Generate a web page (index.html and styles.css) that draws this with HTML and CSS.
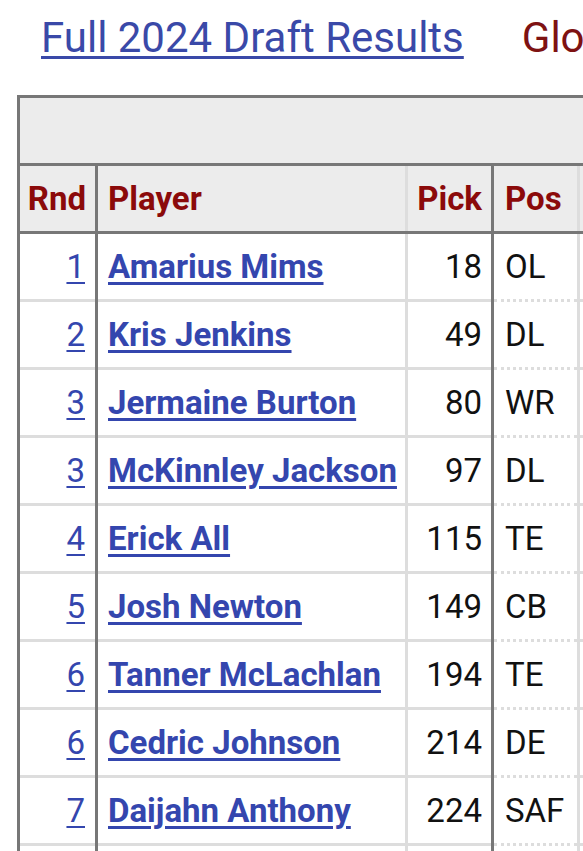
FILE: index.html
```html
<!DOCTYPE html>
<html>
<head>
<meta charset="utf-8">
<link rel="stylesheet" href="styles.css">
</head>
<body>
<div class="top">
  <a class="title" href="#">Full 2024 Draft Results</a>
  <span class="side">Glossary</span>
</div>
<table class="draft">
  <colgroup>
    <col class="c-rnd"><col class="c-player"><col class="c-pick"><col class="c-pos"><col class="c-more">
  </colgroup>
  <tr class="cap"><td colspan="5"></td></tr>
  <tr class="head">
    <th class="rnd">Rnd</th><th class="player">Player</th><th class="pick">Pick</th><th class="pos">Pos</th><th class="more">College</th>
  </tr>
  <tr><td class="rnd"><a href="#">1</a></td><td class="player"><a href="#">Amarius Mims</a></td><td class="pick">18</td><td class="pos">OL</td><td class="more">Georgia</td></tr>
  <tr><td class="rnd"><a href="#">2</a></td><td class="player"><a href="#">Kris Jenkins</a></td><td class="pick">49</td><td class="pos">DL</td><td class="more">Michigan</td></tr>
  <tr><td class="rnd"><a href="#">3</a></td><td class="player"><a href="#">Jermaine Burton</a></td><td class="pick">80</td><td class="pos">WR</td><td class="more">Alabama</td></tr>
  <tr><td class="rnd"><a href="#">3</a></td><td class="player"><a href="#">McKinnley Jackson</a></td><td class="pick">97</td><td class="pos">DL</td><td class="more">Texas A&amp;M</td></tr>
  <tr><td class="rnd"><a href="#">4</a></td><td class="player"><a href="#">Erick All</a></td><td class="pick">115</td><td class="pos">TE</td><td class="more">Iowa</td></tr>
  <tr><td class="rnd"><a href="#">5</a></td><td class="player"><a href="#">Josh Newton</a></td><td class="pick">149</td><td class="pos">CB</td><td class="more">TCU</td></tr>
  <tr><td class="rnd"><a href="#">6</a></td><td class="player"><a href="#">Tanner McLachlan</a></td><td class="pick">194</td><td class="pos">TE</td><td class="more">Arizona</td></tr>
  <tr><td class="rnd"><a href="#">6</a></td><td class="player"><a href="#">Cedric Johnson</a></td><td class="pick">214</td><td class="pos">DE</td><td class="more">Ole Miss</td></tr>
  <tr><td class="rnd"><a href="#">7</a></td><td class="player"><a href="#">Daijahn Anthony</a></td><td class="pick">224</td><td class="pos">SAF</td><td class="more">Ole Miss</td></tr>
  <tr><td class="rnd"><a href="#">7</a></td><td class="player"><a href="#">Matt Lee</a></td><td class="pick">237</td><td class="pos">C</td><td class="more">Miami</td></tr>
</table>
</body>
</html>
```
FILE: styles.css
```css
html, body {
  margin: 0;
  padding: 0;
  background: #fff;
  overflow: hidden;
}
body {
  font-family: Roboto, "Liberation Sans", sans-serif;
  width: 583px;
  height: 851px;
}
.top {
  display: flex;
  white-space: nowrap;
  padding: 14px 0 0 41px;
  height: 48px;
  line-height: 48px;
  font-size: 42px;
  margin-bottom: 33px;
}
.title {
  color: #3a49a8;
  text-decoration: underline;
  text-decoration-thickness: 3px;
  text-underline-offset: 4px;
}
.side {
  color: #7e1212;
  margin-left: 58px;
}
.draft {
  margin-left: 17px;
  border-collapse: collapse;
  table-layout: fixed;
  width: 700px;
  font-size: 33px;
  border: 3px solid #777;
}
.c-rnd { width: 78px; }
.c-player { width: 310px; }
.c-pick { width: 86px; }
.c-pos { width: 86px; }
.c-more { width: 140px; }
.draft td, .draft th {
  height: 68px;
  padding: 0 10px;
  border-top: 3px solid #ddd;
  border-left: 3px solid #ddd;
  white-space: nowrap;
  overflow: hidden;
  box-sizing: border-box;
}
.draft .cap td {
  background: #ececec;
  border: 3px solid #777;
}
.draft .head th {
  background: #ececec;
  color: #8b0a0a;
  font-weight: 700;
  border-top: 3px solid #777;
  border-bottom: 3px solid #777;
  text-align: left;
}
.draft th.rnd { text-align: right; padding-right: 9px; padding-left: 4px; }
.draft th.pick { text-align: right; padding-right: 9px; padding-left: 4px; }
.draft .rnd {
  text-align: right;
  border-left: 3px solid #777;
  border-right: 3px solid #777;
}
.draft td.pick { text-align: right; padding-right: 9px; color: #111; }
.draft .pos {
  border-left: 3px solid #777;
  padding-left: 11px;
  color: #111;
}
.draft td.pos {
  border-top: 3px dotted #ddd;
}
.draft td.more { color: #111; }
.draft a {
  color: #3446ae;
  text-decoration: underline;
  text-decoration-thickness: 3px;
  text-underline-offset: 4px;
}
.draft .player a { font-weight: 700; }
.draft .rnd a { font-weight: 400; text-decoration-thickness: 2px; }
```
